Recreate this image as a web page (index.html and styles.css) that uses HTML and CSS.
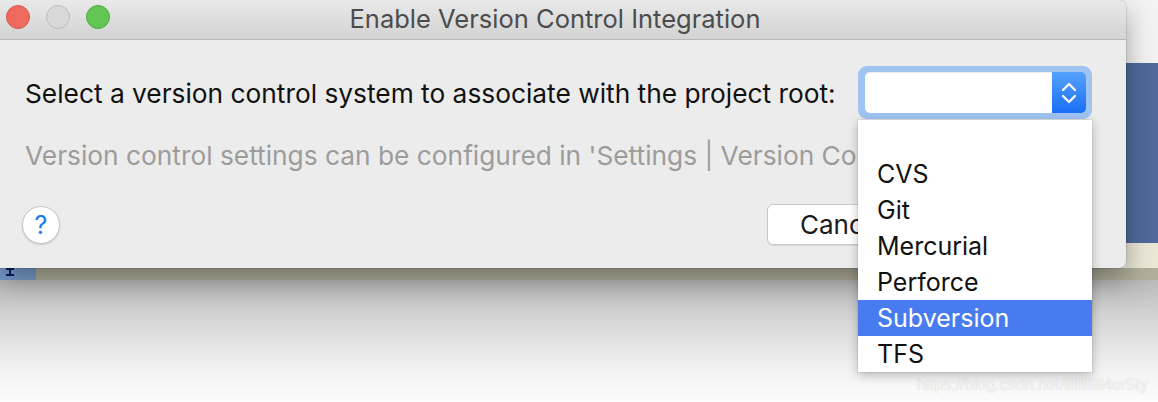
FILE: index.html
```html
<!DOCTYPE html>
<html>
<head>
<meta charset="utf-8">
<link rel="stylesheet" href="styles.css">
</head>
<body>
<div class="desk">
  <div class="editor">
    <div class="editor-right">
      <div class="er-top"></div>
      <div class="er-panel"></div>
      <div class="er-beige"></div>
    </div>
    <div class="editor-strip">
      <div class="gutter">
        <svg class="glyph" width="20" height="12" viewBox="0 0 20 12"><path d="M6 0 H14 V2 H11 V6 H14 V8 H6 V6 H9 V2 H6 Z" fill="#0c1a6a"/></svg>
      </div>
      <div class="strip-rest"></div>
    </div>
  </div>
  <div class="lower">
    <span class="watermark">https://blog.csdn.net/lllllllllll4er5ty</span>
  </div>

  <div class="dialog">
    <div class="titlebar">
      <div class="lights">
        <span class="light red"></span>
        <span class="light gray"></span>
        <span class="light green"></span>
      </div>
      <div class="title">Enable Version Control Integration</div>
    </div>
    <div class="content">
      <div class="row">
        <span class="label">Select a version control system to associate with the project root:</span>
        <div class="combo">
          <div class="combo-field"></div>
          <div class="combo-step">
            <svg width="20" height="26" viewBox="0 0 20 26"><path d="M4 10 L10 4 L16 10 M4 16 L10 22 L16 16" fill="none" stroke="#fff" stroke-width="2.3" stroke-linecap="round" stroke-linejoin="round"/></svg>
          </div>
        </div>
      </div>
      <div class="hint">Version control settings can be configured in 'Settings | Version Control'</div>
      <div class="buttons">
        <div class="help">?</div>
        <div class="btn">Cancel</div>
      </div>
    </div>
  </div>

  <ul class="menu">
    <li class="item"></li>
    <li class="item">CVS</li>
    <li class="item">Git</li>
    <li class="item">Mercurial</li>
    <li class="item">Perforce</li>
    <li class="item selected">Subversion</li>
    <li class="item">TFS</li>
  </ul>
</div>
</body>
</html>
```

FILE: styles.css
```css
* { box-sizing: border-box; }
html, body { margin: 0; padding: 0; }
body {
  width: 1158px;
  height: 402px;
  overflow: hidden;
  font-family: Inter, "Noto Sans", sans-serif;
}
.desk {
  position: relative;
  width: 1158px;
  height: 402px;
  background: #fafafa;
}
.editor {
  height: 280px;
  display: flex;
  flex-direction: column;
  justify-content: space-between;
  background: #f1f1f1;
}
.editor-right {
  align-self: flex-end;
  width: 32px;
  height: 268px;
  display: flex;
  flex-direction: column;
}
.er-top { height: 63px; background: #f3f3f3; }
.er-panel { height: 180px; background: #506a9b; }
.er-beige { flex: 1; background: #ece8d8; }
.editor-strip {
  height: 12px;
  display: flex;
}
.gutter {
  width: 36px;
  background: #7a9dcc;
  overflow: hidden;
  display: flex;
  align-items: flex-start;
}
.glyph { display: block; }
.strip-rest { flex: 1; background: #b2af9c; }
.lower {
  height: 122px;
  background: linear-gradient(#b9b9b9 0%, #d8d8d8 35%, #f3f3f3 75%, #fcfcfc 100%);
  display: flex;
  justify-content: flex-end;
  align-items: flex-end;
  padding: 0 10px 8px 0;
}
.watermark {
  font: 16px "Liberation Sans", Arial, sans-serif;
  color: #f6f6f6;
  text-shadow: 0 0 1px #c4c4c4;
}

.dialog {
  position: absolute;
  left: 0;
  top: 0;
  width: 1126px;
  height: 268px;
  background: #ececec;
  border-radius: 0 7px 7px 0;
  box-shadow: 0 12px 28px rgba(0,0,0,0.35), 0 0 0 0.5px rgba(0,0,0,0.2);
  overflow: hidden;
}
.titlebar {
  height: 40px;
  background: linear-gradient(#e9e9e9, #d3d3d3);
  border-bottom: 1px solid #b6b6b6;
  display: flex;
  align-items: center;
}
.lights {
  display: flex;
  gap: 16px;
  padding-left: 6px;
  margin-top: -5px;
}
.light {
  width: 24px;
  height: 24px;
  border-radius: 50%;
  display: block;
}
.red { background: #ee6a5e; border: 1px solid #d8584d; }
.gray { background: #d8d8d8; border: 1px solid #bdbdbd; }
.green { background: #62c655; border: 1px solid #4eaa42; }
.title {
  flex: 1;
  text-align: center;
  font-size: 25.5px;
  color: #4c4c4c;
  margin-left: -126px;
  margin-top: -3px;
}
.content {
  padding: 0 0 0 25px;
}
.row {
  display: flex;
  align-items: center;
  justify-content: space-between;
  padding-top: 26px;
  padding-right: 34px;
}
.label {
  font-size: 26.3px;
  color: #111;
  padding-top: 1px;
}
.combo {
  width: 234px;
  height: 53px;
  border-radius: 9px;
  background: #9fc4f2;
  padding: 6px 6px 6px 7px;
  display: flex;
}
.combo-field {
  flex: 1;
  background: #fff;
  border-radius: 5px 0 0 5px;
  box-shadow: inset 0 1px 1px rgba(0,0,0,0.08);
}
.combo-step {
  width: 34px;
  background: linear-gradient(#55a2fb, #1a6ef5);
  border-radius: 0 5px 5px 0;
  display: flex;
  align-items: center;
  justify-content: center;
}
.hint {
  font-size: 26.3px;
  line-height: 32px;
  color: #9c9c9c;
  white-space: nowrap;
  margin-top: 21px;
}
.buttons {
  display: flex;
  align-items: center;
  margin-top: 32px;
}
.help {
  width: 38px;
  height: 38px;
  margin-left: -3px;
  border-radius: 50%;
  background: #fff;
  border: 1px solid #c6c6c6;
  box-shadow: 0 1px 2px rgba(0,0,0,0.15);
  color: #1a7cf5;
  font-size: 25px;
  display: flex;
  align-items: center;
  justify-content: center;
}
.btn {
  margin-left: 707px;
  width: 180px;
  height: 41px;
  background: #fff;
  border: 1px solid #c8c8c8;
  border-radius: 6px;
  box-shadow: 0 1px 1px rgba(0,0,0,0.08);
  font-size: 26px;
  color: #1a1a1a;
  padding-left: 32px;
  display: flex;
  align-items: center;
}

.menu {
  position: absolute;
  left: 858px;
  top: 120px;
  width: 234px;
  margin: 0;
  padding: 0;
  list-style: none;
  background: #fff;
  box-shadow: 0 3px 10px rgba(0,0,0,0.25), 0 0 0 1px rgba(0,0,0,0.06);
}
.item {
  height: 36px;
  line-height: 36px;
  padding-left: 19px;
  font-size: 25px;
  color: #111;
}
.item.selected {
  background: #477bef;
  color: #fff;
}
```
